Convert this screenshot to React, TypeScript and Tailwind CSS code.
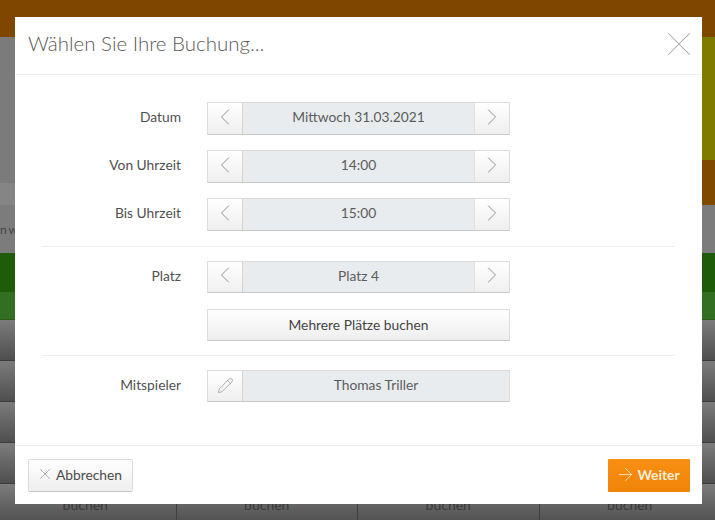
import { ArrowRight, ChevronLeft, ChevronRight, Pencil, X } from "lucide-react";

const BgRow = ({ label }: { label?: boolean }) => (
  <div className="-ml-[5px] grid h-[41px] w-[726px] grid-cols-4 border-b border-[#3c3c3c] bg-gradient-to-b from-[#7c7c7c] to-[#4f4f4f]">
    {label
      ? ["buchen", "buchen", "buchen", "buchen"].map((text, i) => (
          <div key={i} className="border-r border-[#3f3f3f] pt-[11px] text-center text-sm text-[#3a3a3a]">
            {text}
          </div>
        ))
      : null}
  </div>
);

const Background = () => (
  <div className="h-[520px] overflow-hidden">
    <div className="h-[37px] bg-[#7f4600]" />
    <div className="flex h-[123px] justify-between bg-[#7b7b7b]">
      <div />
      <div className="w-[40px] bg-[#7f7a00]" />
    </div>
    <div className="flex h-[23px] justify-end bg-[#7b7b7b]">
      <div className="w-[40px] bg-[#7f4a00]" />
    </div>
    <div className="flex h-[22px] justify-end bg-[#858585]">
      <div className="w-[40px] bg-[#7f4a00]" />
    </div>
    <div className="h-[48px] bg-[#7c7c7c] pt-[16px] text-[12px] tracking-[-0.5px] text-[#444444]">n w</div>
    <div className="h-[39px] bg-[#1f5c0a]" />
    <div className="h-[28px] border-b border-[#2a5a18] bg-[#336f22]" />
    <BgRow />
    <BgRow />
    <BgRow />
    <BgRow />
    <BgRow label />
  </div>
);

const Label = ({ text, lift }: { text: string; lift: string }) => (
  <div className={`w-[166px] text-right text-[13.8px] text-[#505050] ${lift}`}>{text}</div>
);

const SideButton = ({ children, side }: { children: React.ReactNode; side: "left" | "right" }) => (
  <div
    className={`flex h-full w-[35px] shrink-0 items-center justify-center bg-gradient-to-b from-white to-[#efefef] ${
      side === "left" ? "border-r border-[#d4d4d4]" : "border-l border-[#e0e0e0]"
    }`}
  >
    {children}
  </div>
);

const Stepper = ({ label, value, short }: { label: string; value: string; short?: boolean }) => (
  <div className="flex items-center">
    <Label text={label} lift={short ? "pb-[1px]" : "pb-[3px]"} />
    <div
      className={`ml-[26px] flex w-[303px] items-stretch border border-[#dcdcdc] border-b-[#c8c8c8] ${
        short ? "h-[32px]" : "h-[33px]"
      }`}
    >
      <SideButton side="left">
        <ChevronLeft size={28} strokeWidth={0.8} className="-mt-[4px] text-[#8a8a8a]" />
      </SideButton>
      <div
        className={`flex flex-1 items-center justify-center bg-[#e9ecef] text-[13.8px] text-[#5c5c5c] ${
          short ? "pb-[1px]" : "pb-[3px]"
        }`}
      >
        {value}
      </div>
      <SideButton side="right">
        <ChevronRight size={28} strokeWidth={0.8} className="-mt-[4px] text-[#8a8a8a]" />
      </SideButton>
    </div>
  </div>
);

export default function App() {
  return (
    <div className="relative h-[520px] w-[715px] overflow-hidden font-['Lato','Carlito','Open_Sans',sans-serif]">
      <Background />

      <div className="absolute left-[15px] top-[17px] flex h-[487px] w-[687px] flex-col bg-white">
        <div className="flex h-[58px] items-center justify-between border-b border-[#f1f1f1] pl-[13px] pr-[2px]">
          <h1 className="pb-[5px] text-[20.5px] font-light text-[#5a5a5a]">Wählen Sie Ihre Buchung...</h1>
          <X size={42} strokeWidth={0.6} className="-mt-[3px] text-[#a8a8a8]" />
        </div>

        <div className="flex flex-1 flex-col pt-[27px]">
          <div className="flex flex-col gap-[15px]">
            <Stepper label="Datum" value="Mittwoch 31.03.2021" />
            <Stepper label="Von Uhrzeit" value="14:00" />
            <Stepper label="Bis Uhrzeit" value="15:00" />
          </div>

          <div className="mx-[27px] mb-[14px] mt-[15px] border-t border-[#efefef]" />

          <Stepper label="Platz" value="Platz 4" short />

          <div className="ml-[192px] mt-[16px] flex h-[32px] w-[303px] items-center justify-center border border-[#dcdcdc] border-b-[#c4c4c4] bg-gradient-to-b from-white to-[#eeeeee] text-[13.8px] text-[#444444]">
            Mehrere Plätze buchen
          </div>

          <div className="mx-[27px] mb-[14px] mt-[14px] border-t border-[#efefef]" />

          <div className="flex items-center">
            <Label text="Mitspieler" lift="pb-[1px]" />
            <div className="ml-[26px] flex h-[32px] w-[303px] items-stretch border border-[#dcdcdc] border-b-[#c8c8c8]">
              <SideButton side="left">
                <Pencil size={17} strokeWidth={0.8} className="-mt-[2px] text-[#7a7a7a]" />
              </SideButton>
              <div className="flex flex-1 items-center justify-center bg-[#e9ecef] pb-[1px] text-[13.8px] text-[#5c5c5c]">
                Thomas Triller
              </div>
            </div>
          </div>
        </div>

        <div className="flex h-[59px] items-start justify-between border-t border-[#f1f1f1] pl-[13px] pr-[12px] pt-[13px]">
          <div className="flex h-[33px] w-[105px] items-center justify-center gap-[2px] rounded-[2px] border border-[#dcdcdc] border-b-[#c8c8c8] bg-gradient-to-b from-white to-[#eeeeee] pb-[1px] text-[13.8px] text-[#4a4a4a]">
            <X size={18} strokeWidth={0.9} className="-ml-[3px] -mt-[2px] text-[#8a8a8a]" />
            Abbrechen
          </div>
          <div className="flex h-[33px] w-[82px] items-center justify-center gap-[1px] rounded-[1px] bg-gradient-to-b from-[#f98f12] to-[#ef8407] pb-[1px] text-[13.8px] font-bold text-[#fdeeda]">
            <ArrowRight size={21} strokeWidth={0.9} className="-ml-[3px] -mt-[2px]" />
            Weiter
          </div>
        </div>
      </div>
    </div>
  );
}
